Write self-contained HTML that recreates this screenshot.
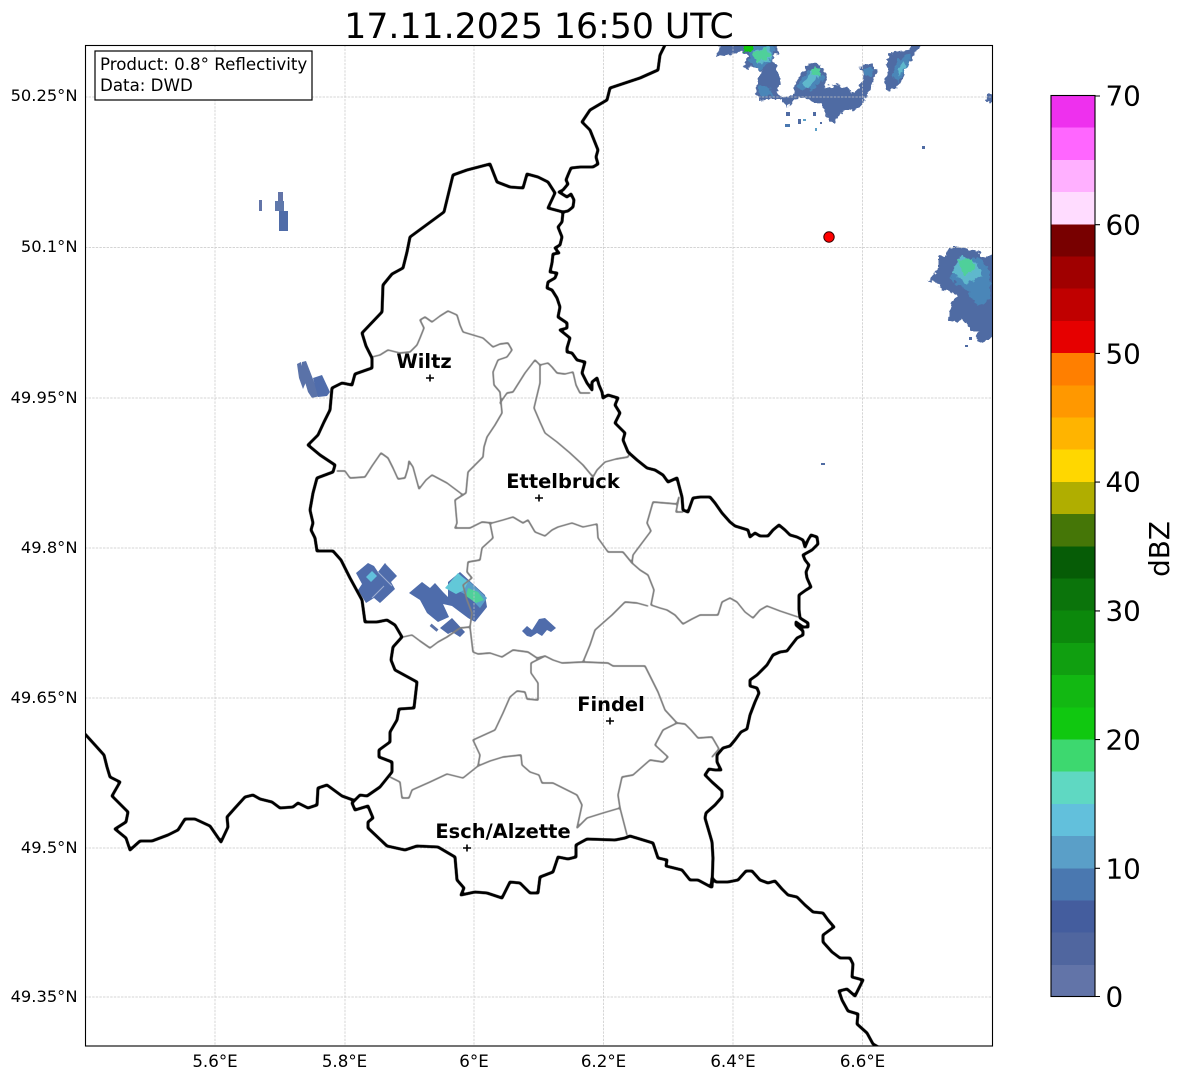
<!DOCTYPE html>
<html><head><meta charset="utf-8"><style>
html,body{margin:0;padding:0;background:#fff}
svg{display:block}
text{font-family:"DejaVu Sans","Liberation Sans",sans-serif;fill:#000}
</style></head><body>
<svg width="1184" height="1081" viewBox="0 0 1184 1081" xmlns="http://www.w3.org/2000/svg">
<defs>
<clipPath id="ax"><rect x="85.5" y="45.5" width="907" height="1000.5"/></clipPath>
<filter id="rough" filterUnits="userSpaceOnUse" x="0" y="0" width="1184" height="1081" color-interpolation-filters="sRGB">
<feTurbulence type="fractalNoise" baseFrequency="0.22" numOctaves="2" seed="4" result="n"/>
<feDisplacementMap in="SourceGraphic" in2="n" scale="7" xChannelSelector="R" yChannelSelector="G"/>
</filter>
<filter id="smooth" filterUnits="userSpaceOnUse" x="0" y="0" width="1184" height="1081" color-interpolation-filters="sRGB">
<feGaussianBlur stdDeviation="0.8"/>
<feComponentTransfer><feFuncA type="linear" slope="2.6" intercept="-0.55"/></feComponentTransfer>
</filter>
</defs>
<rect width="1184" height="1081" fill="#fff"/>
<g clip-path="url(#ax)">
<!-- radar NE -->
<g filter="url(#rough)">
<g fill="#4f6ba3">
<polygon points="715,55 720,48 718,43 775,43 779,52 773,57 780,80 777,93 783,97 793,95 795,83 810,62 820,65 827,77 823,88 837,85 847,88 853,93 857,88 862,82 864,73 859,67 872,63 878,73 873,83 863,103 853,110 847,109 840,114 834,124 827,118 822,104 805,98 795,99 787,109 782,99 770,99 760,100 755,92 757,80 762,72 755,67 743,68 748,57 742,50 730,55 717,57"/>
<polygon points="888,53 910,50 913,43 922,43 913,57 903,70 903,82 893,88 888,93 885,83 887,70"/>
<polygon points="985,98 990,93 995,93 995,103 988,103"/>
<polygon points="948,247 958,247 977,251 982,257 996,255 996,333 982,343 975,338 978,332 970,330 963,318 957,322 948,320 952,303 957,293 943,290 938,283 928,281 937,270 937,257 947,255"/>
</g>
<g fill="#4a86b8">
<polygon points="748,43 775,43 772,60 760,70 750,62"/>
<polygon points="796,88 808,70 820,70 824,80 812,90"/>
<polygon points="892,75 898,60 912,52 908,66 898,82"/>
<polygon points="950,278 960,258 980,258 990,272 990,300 978,306 968,292"/>
<polygon points="865,68 874,68 871,77 864,74"/>
<polygon points="758,85 770,88 774,96 760,96"/>
</g>
<g fill="#5fb8cc">
<polygon points="752,52 770,46 772,58 760,65"/>
<polygon points="802,84 812,70 819,76 808,90"/>
<polygon points="952,272 960,256 978,264 982,276 966,284"/>
<polygon points="897,71 904,62 906,68 899,76"/>
</g>
<g fill="#4fd09a">
<polygon points="752,54 765,48 772,56 758,62"/>
<polygon points="811,69 820,68 821,75 812,75"/>
<polygon points="958,260 972,258 974,270 964,275"/>
</g>
<rect x="744" y="44" width="9" height="7" fill="#10c810"/>
</g>
<g fill="#4f6ba3">
<rect x="922" y="146" width="3" height="3"/>
<rect x="786" y="112" width="4" height="4"/><rect x="813" y="112" width="3" height="4"/><rect x="798" y="119" width="3" height="5"/><rect x="803" y="119" width="3" height="2" fill="#5a9fc8"/><rect x="785" y="124" width="5" height="3" fill="#4a78b0"/><rect x="815" y="128" width="2" height="3" fill="#5a9fc8"/><rect x="820" y="122" width="2" height="2"/><rect x="965" y="345" width="3" height="2"/><rect x="969" y="337" width="3" height="3"/>
<rect x="821" y="463" width="4" height="2"/>
<rect x="259" y="200" width="3" height="11" fill="#6274a8"/>
<rect x="275" y="201" width="9" height="10" fill="#5f78ab"/><rect x="278" y="192" width="5" height="9" fill="#6274a8"/><rect x="279" y="211" width="9" height="20" fill="#4f6ca8"/>
<polygon points="297,364 301,362 306,382 303,389 299,378" fill="#5a72a8"/>
<polygon points="302,362 306,361 318,392 320,396 312,398 308,392 302,372" fill="#5a72a8"/>
<polygon points="313,378 322,375 330,392 327,396 318,397" fill="#4f6cab"/>
<!-- central cells -->
<polygon points="356,573 368,563 374,566 378,572 385,563 397,576 391,582 395,589 380,603 374,598 366,603 358,590 362,584" fill="#4f6cab"/>
<polygon points="409,593 422,582 430,588 435,583 443,592 448,597 448,582 460,572 485,595 487,607 475,622 468,618 452,606 443,604 449,617 438,622 427,613 420,600" fill="#4e6cab"/>
<polygon points="440,628 452,618 465,632 460,637 452,632 448,634" fill="#4f6ba8"/>
<rect x="430" y="626" width="9" height="3" transform="rotate(40 434 627)" fill="#5a72a8"/>
<polygon points="522,631 527,626 532,630 539,619 545,618 556,628 551,632 547,630 542,636 537,633 531,637 527,636" fill="#4f6cab"/>
<polygon points="448,585 458,574 470,582 487,598 480,608 468,596" fill="#5a9fc8"/>
<polygon points="366,577 372,571 377,576 371,582" fill="#62c0dc"/>
<polygon points="445,588 458,573 468,582 464,590 456,594" fill="#62c8d8"/>
<polygon points="468,588 478,592 484,600 476,603 466,596" fill="#4fd09a"/>
<path d="M378,572L392,586M386,564L396,574M372,598L384,586" stroke="#fff" stroke-width="1" opacity=".45"/>
</g>
<!-- grid -->
<g stroke="#c6c6c6" stroke-width="0.7" stroke-dasharray="2.4 1.2" fill="none">
<path d="M215 45V1046M345 45V1046M474 45V1046M603.5 45V1046M733 45V1046M862.5 45V1046"/>
<path d="M85 97H992M85 247.5H992M85 398H992M85 548H992M85 698H992M85 848H992M85 997H992"/>
</g>
<!-- gray -->
<g fill="none" stroke="#808080" stroke-width="1.4" stroke-linejoin="round" stroke-linecap="round" filter="url(#smooth)">
<path d="M372,357 380,355 388,350 400,353 410,352 417,345 420,338 424,328 420,320 425,317 432,322 440,316 448,311 457,315 460,325 463,332 473,335 483,338 493,347 500,344 508,343 512,350 507,357 498,360 493,372 494,385 500,392 502,413 495,425 487,437 484,447 483,457 468,472 467,482 466,493 455,500 456,512 457,523 455,528"/>
<path d="M500,403 507,393 513,392 525,373 535,360 540,365 540,383 534,408 540,422 545,433 557,442 570,453 583,465 593,477 597,470 605,462 616,459 628,457 630,452"/>
<path d="M540,365 548,363 552,367 557,373 565,374 573,372 576,385 580,393 590,393"/>
<path d="M337,471 345,471 350,478 365,477 372,466 381,453 388,458 393,468 398,479 405,478 408,468 409,461 413,467 419,489 426,480 432,475 447,483 463,495"/>
<path d="M455,528 470,528 482,522 492,523 503,520 513,517 523,523 528,520 535,532 545,536 552,530 558,527 572,523 583,527 597,524 598,538 608,552 623,552 632,563 640,570 648,575 654,590 651,605 660,608 667,610 675,615 683,624 692,619 700,615 718,615 722,602 730,598 737,602 745,612 753,618 760,610 767,606 780,611 798,617"/>
<path d="M632,563 633,555 651,531 647,523 653,502 677,504 679,497 676,512 683,512"/>
<path d="M490,523 493,538 482,548 480,560 468,562 467,572 472,578 463,585 467,600 472,613 470,627 473,652 478,654 490,653 502,657 513,650 528,652 537,658 545,656 553,660 562,663 583,662 590,645 595,630 604,622 612,615 625,602 637,603 648,606"/>
<path d="M403,637 412,635 420,641 430,648 438,642 447,637 460,628 470,627"/>
<path d="M583,662 608,663 613,666 645,666 652,680 658,692 665,710 677,723 685,724 691,730 698,738 712,737 719,749 712,757"/>
<path d="M677,723 663,730 655,745 668,757 663,762 650,760 642,767 633,775 622,777 618,795 620,808 627,835"/>
<path d="M620,808 603,813 587,818 577,828 582,805 577,795 565,789 553,783 542,783 539,775 530,772 522,765 521,755 503,757 490,761 478,766 463,778 447,774 430,782 412,790 409,798 402,798 400,782 390,777"/>
<path d="M478,766 480,755 473,740 495,730 503,713 510,697 517,691 525,692 527,699 538,700 538,683 531,673 531,663 545,656"/>
</g>
<!-- black borders -->
<g fill="none" stroke="#000" stroke-width="2.6" stroke-linejoin="round" stroke-linecap="round" filter="url(#smooth)">
<path d="M665,45 660,55 658,70 640,78 625,83 610,88 607,100 590,110 582,122 586,126 590,130 594,140 598,150 596,157 598,164 593,167 580,167 571,168 568,175 566,180 568,184 563,190 559,192 567,197 571,194 574,200 573,207 568,211 563,212 562,222 558,227 562,237 560,245 555,248 559,253 553,254 552,263 550,272 557,273 555,278 548,282 547,288 552,290 557,298 560,307 558,317 567,323 567,328 560,330 570,338 567,348 567,352 572,353 577,360 585,362 582,373 587,383 592,390 592,382 597,378 599,385 602,392 603,398 608,395 618,398 615,405 620,413 615,423 625,433 623,440 628,452 637,460 647,468 655,470 663,475 668,482 677,478 682,497 683,510 688,512 693,498 700,497 710,497 715,503 722,513 730,522 735,526 748,530 750,537 755,533 760,536 768,536 773,530 779,525 785,530 790,535 797,537 803,540 805,547 808,540 811,535 817,537 818,544 812,550 803,555 805,560 809,565 806,572 807,578 811,587 806,590 799,595 799,610 800,618 808,623 808,627 803,627 796,622 796,625 803,631 803,635 797,638 790,647 787,651 780,652 773,655 767,665 757,675 750,680 750,686 757,688 759,693 755,702 750,715 747,729 741,732 735,740 730,746 723,748 717,755 717,762 721,770 715,770 709,769 705,775 712,782 722,791 722,797 715,805 706,813 705,818 710,835 712,842 713,858 712,887"/>
<path d="M563,212 548,208 555,193 548,182 538,177 527,174 523,188 510,187 497,182 490,164 467,170 453,175 444,212 410,237 407,252 403,268 392,274 383,285 382,312 362,333 366,346 372,358 372,368 355,374 352,385 342,383 332,388 330,410 324,422 318,435 308,445 320,455 335,465 333,472 317,478 313,493 310,510 313,523 311,530 315,538 317,551 333,551 341,560 350,578 362,600 365,622 377,622 387,620 395,625 402,637 393,647 391,660 395,670 417,682 414,708 399,709 397,720 390,732 390,742 379,750 379,757 392,762 392,772 380,787 367,796 360,795 352,803 355,810 368,806 373,818 368,822 368,828 387,846 405,850 417,846 438,847 455,857 457,880 464,888 461,895 475,892 487,893 502,898 510,882 520,883 530,893 538,893 540,877 553,872 558,857 568,859 576,857 576,845 587,839 615,840 625,838 630,836 653,843 658,858 667,860 666,866 682,870 690,880 698,880 711,887 712,878 716,882 728,882 738,880 746,871 752,871 760,880 768,883 775,881 782,889 788,895 797,897 805,905 813,912 823,913 828,920 834,927 823,935 823,942 832,952 840,958 850,958 853,964 852,977 863,980 855,996 847,989 839,991 842,1000 848,1011 858,1014 857,1024 867,1033 873,1044 880,1048"/>
<path d="M85,734 95,745 104,755 107,767 110,777 120,782 112,796 128,812 126,822 115,829 126,838 130,850 140,841 152,841 168,835 178,830 185,819 195,819 210,826 221,842 228,827 227,817 235,808 245,797 253,795 260,799 272,802 280,808 293,807 298,803 308,808 317,805 318,788 327,785 342,796 353,800"/>
</g>
<!-- city markers -->
<g stroke="#000" stroke-width="1.6" fill="none">
<path d="M426,378h8M430,374.5v7"/><path d="M535,498h8M539,494.5v7"/><path d="M606,721h8M610,717.5v7"/><path d="M463,848h8M467,844.5v7"/>
</g>
<circle cx="829" cy="237" r="5.2" fill="#f00" stroke="#300" stroke-width="1"/>
<g font-size="19.44" font-weight="700" text-anchor="middle">
<text x="424" y="368">Wiltz</text>
<text x="563" y="488">Ettelbruck</text>
<text x="611" y="711">Findel</text>
<text x="503" y="838">Esch/Alzette</text>
</g>
<rect x="95" y="51" width="217" height="49" fill="#fff" stroke="#000" stroke-width="1.2"/>
<text x="100" y="70" font-size="16.67">Product: 0.8° Reflectivity</text>
<text x="100" y="91" font-size="16.67">Data: DWD</text>
</g>
<rect x="85.5" y="45.5" width="907" height="1000.5" fill="none" stroke="#000" stroke-width="1.1"/>
<text x="539" y="38" font-size="34.7" text-anchor="middle">17.11.2025 16:50 UTC</text>
<g font-size="16.3" text-anchor="end">
<text x="77.5" y="101">50.25°N</text><text x="77.5" y="252">50.1°N</text><text x="77.5" y="403">49.95°N</text><text x="77.5" y="553">49.8°N</text><text x="77.5" y="703">49.65°N</text><text x="77.5" y="853">49.5°N</text><text x="77.5" y="1002">49.35°N</text>
</g>
<g font-size="16.67" text-anchor="middle">
<text x="215" y="1067">5.6°E</text><text x="344.5" y="1067">5.8°E</text><text x="474" y="1067">6°E</text><text x="603.5" y="1067">6.2°E</text><text x="733" y="1067">6.4°E</text><text x="862.5" y="1067">6.6°E</text>
</g>
<!-- colorbar -->
<g shape-rendering="crispEdges">
<rect x="1051" y="95.5" width="44" height="32.2" fill="#ee30ee"/><rect x="1051" y="127.7" width="44" height="32.2" fill="#ff66ff"/><rect x="1051" y="159.9" width="44" height="32.2" fill="#ffb0ff"/><rect x="1051" y="192.1" width="44" height="32.2" fill="#ffdcff"/>
<rect x="1051" y="224.3" width="44" height="32.2" fill="#780000"/><rect x="1051" y="256.5" width="44" height="32.2" fill="#a00000"/><rect x="1051" y="288.7" width="44" height="32.2" fill="#c00000"/><rect x="1051" y="320.9" width="44" height="32.2" fill="#e60000"/>
<rect x="1051" y="353.1" width="44" height="32.2" fill="#ff7f00"/><rect x="1051" y="385.3" width="44" height="32.2" fill="#ff9800"/><rect x="1051" y="417.5" width="44" height="32.2" fill="#ffb400"/><rect x="1051" y="449.7" width="44" height="32.2" fill="#ffd700"/>
<rect x="1051" y="481.9" width="44" height="32.2" fill="#b0ae00"/><rect x="1051" y="514.1" width="44" height="32.2" fill="#457607"/><rect x="1051" y="546.3" width="44" height="32.2" fill="#065c06"/><rect x="1051" y="578.5" width="44" height="32.2" fill="#0b740b"/>
<rect x="1051" y="610.7" width="44" height="32.2" fill="#0c880c"/><rect x="1051" y="642.9" width="44" height="32.2" fill="#109f10"/><rect x="1051" y="675.1" width="44" height="32.2" fill="#12b812"/><rect x="1051" y="707.3" width="44" height="32.2" fill="#10c810"/>
<rect x="1051" y="739.5" width="44" height="32.2" fill="#3dd86f"/><rect x="1051" y="771.7" width="44" height="32.2" fill="#5fd8c2"/><rect x="1051" y="803.9" width="44" height="32.2" fill="#62c0dc"/><rect x="1051" y="836.1" width="44" height="32.2" fill="#5a9fc8"/>
<rect x="1051" y="868.3" width="44" height="32.2" fill="#4a78b0"/><rect x="1051" y="900.5" width="44" height="32.2" fill="#445d9e"/><rect x="1051" y="932.7" width="44" height="32.2" fill="#50669f"/><rect x="1051" y="964.9" width="44" height="31.6" fill="#6274a8"/>
</g>
<rect x="1051" y="95.5" width="44" height="901" fill="none" stroke="#000" stroke-width="1.1"/>
<path d="M1095 96h5M1095 224.7h5M1095 353.4h5M1095 482.1h5M1095 610.9h5M1095 739.6h5M1095 868.3h5M1095 996.5h5" stroke="#000" stroke-width="1.1"/>
<g font-size="27.78">
<text x="1105.5" y="105.5">70</text><text x="1105.5" y="234.5">60</text><text x="1105.5" y="363.5">50</text><text x="1105.5" y="491.5">40</text><text x="1105.5" y="620.5">30</text><text x="1105.5" y="749.5">20</text><text x="1105.5" y="878.5">10</text><text x="1105.5" y="1006.5">0</text>
</g>
<text transform="translate(1169 549) rotate(-90)" font-size="27.78" text-anchor="middle">dBZ</text>
</svg>
</body></html>
